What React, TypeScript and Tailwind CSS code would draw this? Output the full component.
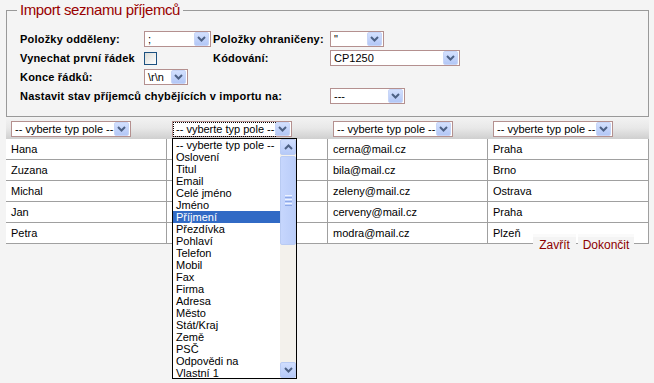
import React from 'react'

const chevronDown = (
  <svg width="9" height="6" viewBox="0 0 9 6">
    <path d="M1 1 L4.5 4.5 L8 1" fill="none" stroke="#4d6185" strokeWidth="2" />
  </svg>
)

const chevronUp = (
  <svg width="9" height="6" viewBox="0 0 9 6">
    <path d="M1 5 L4.5 1.5 L8 5" fill="none" stroke="#4d6185" strokeWidth="2" />
  </svg>
)

function DropButton() {
  return (
    <div className="w-[15px] h-[14px] mr-[1px] flex items-center justify-center rounded-[2px] border border-[#c7d5f7] bg-gradient-to-b from-[#d3e0fe] to-[#b3c7f6]">
      {chevronDown}
    </div>
  )
}

function Select({ value, width, focused }: { value: string; width: string; focused?: boolean }) {
  return (
    <div className={`${width} h-[16px] flex items-center bg-white border border-[#b4908f]`}>
      <div className="flex-1 h-full flex items-center pl-[1px] pr-[1px] min-w-0">
        <span
          className={`h-[13px] flex items-center pl-[2px] pr-[1px] whitespace-nowrap leading-none ${
            focused ? 'outline outline-1 outline-dotted outline-black' : ''
          }`}
        >
          {value}
        </span>
      </div>
      <DropButton />
    </div>
  )
}

const rows = [
  ['Hana', '', 'cerna@mail.cz', 'Praha'],
  ['Zuzana', '', 'bila@mail.cz', 'Brno'],
  ['Michal', '', 'zeleny@mail.cz', 'Ostrava'],
  ['Jan', '', 'cerveny@mail.cz', 'Praha'],
  ['Petra', '', 'modra@mail.cz', 'Plzeň'],
]

const options = [
  '-- vyberte typ pole --',
  'Oslovení',
  'Titul',
  'Email',
  'Celé jméno',
  'Jméno',
  'Příjmení',
  'Přezdívka',
  'Pohlaví',
  'Telefon',
  'Mobil',
  'Fax',
  'Firma',
  'Adresa',
  'Město',
  'Stát/Kraj',
  'Země',
  'PSČ',
  'Odpovědi na',
  'Vlastní 1',
]

export default function App() {
  const label = 'font-bold tracking-[0.2px] whitespace-nowrap'
  return (
    <div className="relative w-[654px] h-[383px] overflow-hidden bg-[#f4f4f4] text-[11px] text-black font-['Liberation_Sans',Arial,sans-serif]">
      <div className="ml-[6px] w-[643px] pt-[2px]">
        {/* Import settings */}
        <fieldset className="border border-[#999999] pl-[13px] pb-[12px]">
          <legend className="ml-[-3px] px-[3px] text-[15px] leading-[16px] text-[#990000] tracking-[-0.4px]">
            Import seznamu příjemců
          </legend>
          <div className="pt-[13px] grid grid-cols-[124px_69px_117px_1fr] auto-rows-[16px] gap-y-[3px] items-center">
            <span className={label}>Položky odděleny:</span>
            <Select value=";" width="w-[67px]" />
            <span className={label}>Položky ohraničeny:</span>
            <Select value={'"'} width="w-[54px]" />

            <span className={label}>Vynechat první řádek</span>
            <div className="w-[13px] h-[13px] border border-[#1c5180] bg-gradient-to-br from-[#dcdcd7] to-white" />
            <span className={label}>Kódování:</span>
            <Select value="CP1250" width="w-[130px]" />

            <span className={label}>Konce řádků:</span>
            <Select value="\r\n" width="w-[44px]" />
            <span />
            <span />

            <span className={`${label} col-span-3`}>Nastavit stav příjemců chybějících v importu na:</span>
            <Select value="---" width="w-[75px]" />
          </div>
        </fieldset>

        {/* Data preview */}
        <div className="grid grid-cols-[161px_161px_160px_161px]">
          {[0, 1, 2, 3].map((i) => (
            <div key={i} className="h-[22px] pt-[4px] pl-[5px] bg-gradient-to-b from-[#f3f3f3] via-[#e8e8e8] to-[#cfcfcf]">
              <Select value="-- vyberte typ pole --" width="w-[120px]" focused={i === 1} />
            </div>
          ))}
          {rows.map((r, ri) =>
            r.map((c, ci) => (
              <div
                key={`${ri}-${ci}`}
                className="h-[21px] bg-white border-r border-b border-[#a0a0a0] pl-[5px] flex items-center"
              >
                {c}
              </div>
            ))
          )}
        </div>
      </div>

      {/* Actions */}
      <div className="absolute left-[533px] top-[234px] w-[43px] h-[26px] bg-[#f4f4f4] border-t-[3px] border-[#fafafa] flex justify-center pt-[1px] text-[12px] leading-[14px] text-[#8c0000]">
        Zavřít
      </div>
      <div className="absolute left-[578px] top-[234px] w-[56px] h-[26px] bg-[#f4f4f4] border-t-[3px] border-[#fafafa] flex justify-center pt-[1px] text-[12px] leading-[14px] text-[#8c0000]">
        Dokončit
      </div>

      {/* Open dropdown list */}
      <div className="absolute left-[172px] top-[138px] w-[125px] h-[241px] bg-white border border-black flex">
        <div className="w-[107px]">
          {options.map((o, i) => (
            <div
              key={o}
              className={`h-[12px] leading-[12px] pl-[3px] whitespace-nowrap ${
                i === 6 ? 'bg-[#316ac5] text-white' : ''
              }`}
            >
              {o}
            </div>
          ))}
        </div>
        <div className="w-[16px] h-full bg-[#f3f1ec] flex flex-col">
          <div className="h-[16px] flex items-center justify-center rounded-[2px] border border-[#b9cbf3] bg-gradient-to-b from-[#d0defe] to-[#b6caf8]">
            {chevronUp}
          </div>
          <div className="mt-[1px] h-[89px] rounded-[2px] border border-[#b9cbf3] bg-gradient-to-r from-[#c6d6fd] to-[#bacdf9] flex flex-col items-center justify-center gap-[1px]">
            <div className="w-[7px] h-[1px] bg-[#eef3ff]" />
            <div className="w-[7px] h-[1px] bg-[#8ea9e8]" />
            <div className="w-[7px] h-[1px] bg-[#eef3ff]" />
            <div className="w-[7px] h-[1px] bg-[#8ea9e8]" />
            <div className="w-[7px] h-[1px] bg-[#eef3ff]" />
            <div className="w-[7px] h-[1px] bg-[#8ea9e8]" />
          </div>
          <div className="flex-1" />
          <div className="h-[16px] flex items-center justify-center rounded-[2px] border border-[#b9cbf3] bg-gradient-to-b from-[#d0defe] to-[#b6caf8]">
            {chevronDown}
          </div>
        </div>
      </div>
    </div>
  )
}
